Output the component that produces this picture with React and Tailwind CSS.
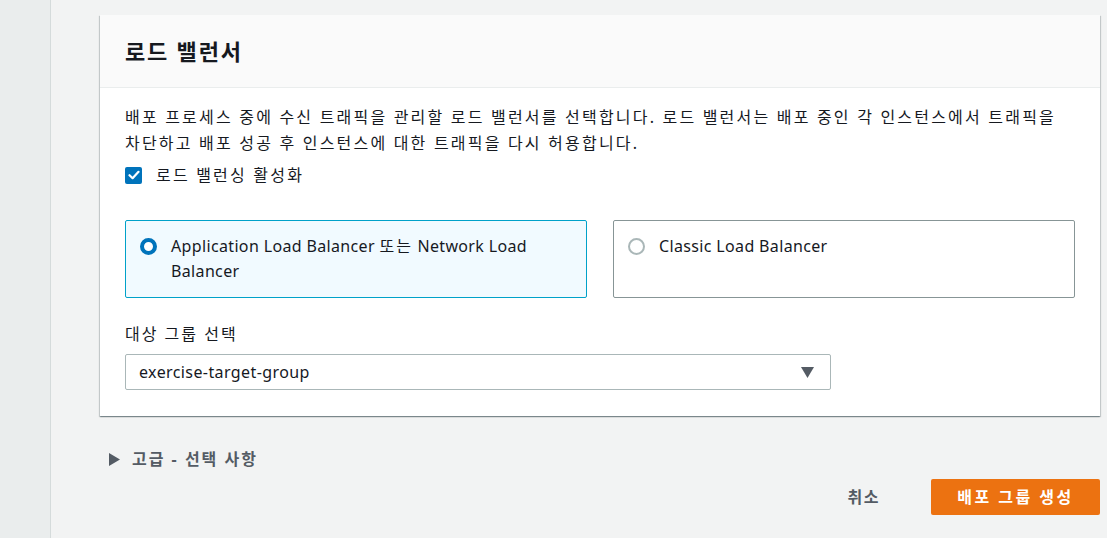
import { useState } from 'react';

const ko = { fontFamily: '"Noto Sans", "Noto Sans CJK KR", sans-serif' };

const RadioCard = ({ selected, onSelect, children }) => (
  <div
    onClick={onSelect}
    className={`flex items-start gap-[14px] pl-[14px] pr-4 pt-[13px] pb-[13px] rounded-[2px] border cursor-pointer ${
      selected ? 'border-[#00a1c9] bg-[#f1faff]' : 'border-[#879596] bg-white'
    }`}
  >
    <span
      className={`mt-[4px] w-[17px] h-[17px] shrink-0 rounded-full ${
        selected ? 'border-[4px] border-[#0073bb] bg-white' : 'border-2 border-[#aab7b8] bg-white'
      }`}
    ></span>
    <span className="text-[16px] leading-[25px] tracking-[0.35px] text-[#16191f]">{children}</span>
  </div>
);

export default function App() {
  const [lb, setLb] = useState('alb');
  const [enabled, setEnabled] = useState(true);

  return (
    <div className="flex w-[1107px] h-[538px] bg-[#f2f3f3] overflow-hidden" style={ko}>
      {/* Side nav collapsed */}
      <div className="w-[51px] shrink-0 bg-[#eaeded] border-r border-[#d5dbdb]"></div>

      <div className="pl-[49px] pt-[15px]">
        {/* Load balancer card */}
        <div className="w-[1000px] bg-white shadow-[0_1px_1px_0_rgba(0,28,36,0.3),1px_1px_1px_0_rgba(0,28,36,0.15),-1px_1px_1px_0_rgba(0,28,36,0.15)]">
          <div className="h-[73px] flex items-center px-[25px] bg-[#fafafa] border-b border-[#eaeded]">
            <h2 className="text-[22px] font-bold tracking-[1.8px] text-[#16191f]">로드 밸런서</h2>
          </div>

          <div className="px-[25px] pt-[16px] pb-[26px]">
            <p className="text-[16px] leading-[26px] tracking-[2.2px] text-[#16191f]">
              배포 프로세스 중에 수신 트래픽을 관리할 로드 밸런서를 선택합니다. 로드 밸런서는 배포 중인 각 인스턴스에서 트래픽을
              <br />
              차단하고 배포 성공 후 인스턴스에 대한 트래픽을 다시 허용합니다.
            </p>

            <label className="mt-[7px] flex items-center gap-[14px] h-[24px] cursor-pointer">
              <span
                onClick={() => setEnabled(!enabled)}
                className={`w-[17px] h-[17px] rounded-[2px] flex items-center justify-center ${
                  enabled ? 'bg-[#0073bb]' : 'border-2 border-[#aab7b8] bg-white'
                }`}
              >
                {enabled && (
                  <svg width="12" height="10" viewBox="0 0 12 10" fill="none">
                    <path d="M1.5 5.2 L4.6 8.2 L10.5 1.8" stroke="white" strokeWidth="2.2" strokeLinecap="round" strokeLinejoin="round" />
                  </svg>
                )}
              </span>
              <span className="text-[16px] tracking-[2.2px] text-[#16191f]">로드 밸런싱 활성화</span>
            </label>

            <div className="mt-[33px] grid grid-cols-2 gap-[26px]">
              <RadioCard selected={lb === 'alb'} onSelect={() => setLb('alb')}>
                Application Load Balancer <span className="tracking-[2px]">또는</span> Network Load Balancer
              </RadioCard>
              <RadioCard selected={lb === 'clb'} onSelect={() => setLb('clb')}>
                Classic Load Balancer
              </RadioCard>
            </div>

            <div className="mt-[25px] text-[16px] leading-[22px] tracking-[2px] text-[#16191f]">대상 그룹 선택</div>
            <div className="mt-[9px] w-[706px] h-[36px] flex items-center justify-between pl-[13px] pr-[16px] border border-[#aab7b8] rounded-[2px] bg-white">
              <span className="text-[16px] tracking-[0.4px] text-[#16191f]">exercise-target-group</span>
              <svg width="13" height="11" viewBox="0 0 13 11">
                <path d="M0 0 H13 L6.5 11 Z" fill="#545b64" />
              </svg>
            </div>
          </div>
        </div>

        {/* Advanced */}
        <div className="mt-[31px] ml-[9px] flex items-center gap-[12px] h-[24px]">
          <svg width="11" height="13" viewBox="0 0 11 13">
            <path d="M0 0 L11 6.5 L0 13 Z" fill="#545b64" />
          </svg>
          <span className="text-[16px] font-bold tracking-[2px] text-[#545b64]">고급 - 선택 사항</span>
        </div>

        {/* Actions */}
        <div className="mt-[8px] flex justify-end items-center">
          <button className="px-[20px] h-[36px] text-[16px] font-bold tracking-[1.5px] text-[#545b64]">취소</button>
          <button className="ml-[31px] w-[169px] h-[36px] rounded-[2px] bg-[#ec7211] text-white text-[16px] font-bold tracking-[2.5px]">
            배포 그룹 생성
          </button>
        </div>
      </div>
    </div>
  );
}
